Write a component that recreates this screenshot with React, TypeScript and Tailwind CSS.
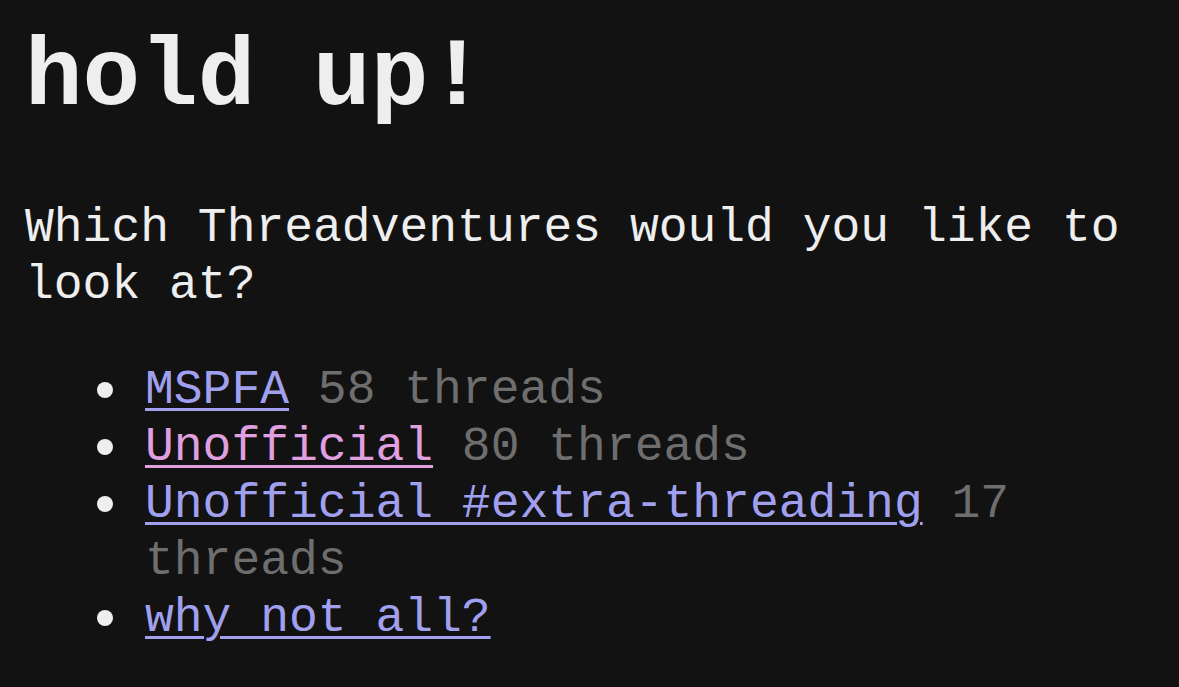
import React from 'react';

const links = [
  { label: 'MSPFA', count: '58 threads', visited: false },
  { label: 'Unofficial', count: '80 threads', visited: true },
  { label: 'Unofficial #extra-threading', count: '17 threads', visited: false },
  { label: 'why not all?', count: null, visited: false },
];

const App: React.FC = () => {
  return (
    <div className="min-h-screen bg-[#121212] text-[#eeeeee] px-[25px] pt-[24px] pb-[40px] font-['Liberation_Mono','Courier_New',monospace]">
      <h1 className="text-[96px] font-bold leading-[109px] mb-[67px]">hold up!</h1>

      <p className="text-[48px] leading-[57px] mb-[48px]">
        Which Threadventures would you like to look at?
      </p>

      <ul className="pl-[120px] text-[48px] leading-[57px]">
        {links.map((l) => (
          <li key={l.label} className="flex">
            <span className="shrink-0 w-[16px] h-[16px] rounded-full bg-[#eeeeee] mt-[20px] -ml-[48px] mr-[32px]" />
            <div>
              <a
                href="#"
                className={
                  l.visited
                    ? 'text-[#e0a0e0] underline decoration-[3px] underline-offset-[5px]'
                    : 'text-[#a0a0ee] underline decoration-[3px] underline-offset-[5px]'
                }
              >
                {l.label}
              </a>
              {l.count && <span className="text-[#6e6e6e]"> {l.count}</span>}
            </div>
          </li>
        ))}
      </ul>
    </div>
  );
};

export default App;
